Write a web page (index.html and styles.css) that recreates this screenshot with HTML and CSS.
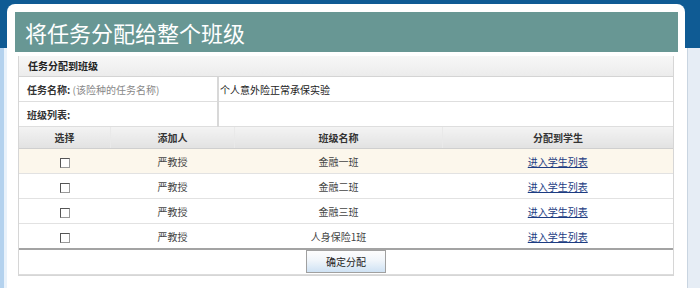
FILE: index.html
```html
<!DOCTYPE html>
<html>
	<head>
		<meta charset="UTF-8">
		<title>将任务分配给整个班级</title>
		<link rel="stylesheet" href="styles.css">
	</head>
	<body>
		<div class="panel">
			<h1 class="title">将任务分配给整个班级</h1>
			<div class="box">
				<div class="box-head">任务分配到班级</div>
				<table class="form">
					<tr>
						<th>任务名称: <span class="hint">(该险种的任务名称)</span></th>
						<td>个人意外险正常承保实验</td>
					</tr>
					<tr>
						<th>班级列表:</th>
						<td></td>
					</tr>
				</table>
				<table class="list">
					<thead>
						<tr>
							<th class="c1">选择</th>
							<th class="c2">添加人</th>
							<th class="c3">班级名称</th>
							<th class="c4">分配到学生</th>
						</tr>
					</thead>
					<tbody>
						<tr class="on">
							<td><input type="checkbox" class="chk"></td>
							<td>严教授</td>
							<td>金融一班</td>
							<td><a href="#">进入学生列表</a></td>
						</tr>
						<tr>
							<td><input type="checkbox" class="chk"></td>
							<td>严教授</td>
							<td>金融二班</td>
							<td><a href="#">进入学生列表</a></td>
						</tr>
						<tr>
							<td><input type="checkbox" class="chk"></td>
							<td>严教授</td>
							<td>金融三班</td>
							<td><a href="#">进入学生列表</a></td>
						</tr>
						<tr>
							<td><input type="checkbox" class="chk"></td>
							<td>严教授</td>
							<td>人身保险1班</td>
							<td><a href="#">进入学生列表</a></td>
						</tr>
					</tbody>
				</table>
				<div class="actions">
					<button class="btn">确定分配</button>
				</div>
			</div>
		</div>
	</body>
</html>
```

FILE: styles.css
```css
html,body{
	margin: 0;
	padding: 0;
	height: 100%;
	overflow: hidden;
}
body{
	font-family: "Noto Sans CJK SC", "Liberation Sans", sans-serif;
	font-size: 10px;
	color: #333;
	background:
		linear-gradient(#0f5b94, #0f5b94) top left / 100% 48px no-repeat,
		linear-gradient(to right, #b4d2ee 0, #b4d2ee 4px, #e9f2fb 4px, #e9f2fb 7px, transparent 7px),
		linear-gradient(to right, transparent 687px, #c9d5e1 687px, #c9d5e1 688px, #e6edf5 688px);
	padding-top: 4px;
	box-sizing: border-box;
}
.panel{
	width: 663px;
	height: 276px;
	margin-left: 7px;
	padding: 8px 7px 0 8px;
	background: #fff;
	border-radius: 8px 8px 0 0;
}
.title{
	margin: 0;
	height: 40px;
	line-height: 40px;
	padding-left: 10px;
	background: #689794;
	color: #fff;
	font-size: 22px;
	font-weight: normal;
}
.box{
	margin: 4px 4px 0 3px;
	border: 1px solid #d6d6d6;
	border-top: 0;
}
.box-head{
	height: 20px;
	line-height: 20px;
	padding-left: 9px;
	font-weight: bold;
	color: #222;
	background: linear-gradient(#f7f7f7, #ececec);
	border-bottom: 1px solid #d4d4d4;
}
table{
	width: 100%;
	border-collapse: collapse;
}
.form th,.form td{
	height: 24px;
	border-bottom: 1px solid #dedede;
	padding: 0;
	vertical-align: middle;
}
.form th{
	width: 190px;
	padding-left: 8px;
	text-align: left;
	font-weight: bold;
	color: #333;
	border-right: 2px solid #d8d8d8;
}
.form td{
	padding-left: 1px;
	color: #222;
}
.hint{
	font-weight: normal;
	color: #888;
}
.list th{
	height: 21px;
	padding: 0;
	font-weight: bold;
	color: #333;
	background: linear-gradient(#f3f3f3, #e2e2e2);
	border-bottom: 1px solid #cfcfcf;
	border-right: 1px solid #e9e9e9;
}
.list th.c4{
	border-right: 0;
}
.c1{ width: 91px; }
.c2{ width: 123px; }
.c3{ width: 207px; }
.list td{
	height: 24px;
	padding: 0;
	text-align: center;
	color: #444;
	border-bottom: 1px solid #e2e2e2;
}
.list tbody tr:last-child td{
	border-bottom: 2px solid #a3a3a3;
}
.list tr.on td{
	background: #fcf7ec;
}
.list a{
	color: #1c3c82;
	text-decoration: underline;
}
.chk{
	-webkit-appearance: none;
	appearance: none;
	width: 10px;
	height: 10px;
	margin: 0;
	vertical-align: middle;
	border: 1px solid #9a9a9a;
	border-top-color: #555;
	border-left-color: #555;
	background: #fff;
}
.actions{
	height: 24px;
	text-align: center;
	border-bottom: 1px solid #dcdcdc;
}
.btn{
	width: 80px;
	height: 23px;
	margin: 0;
	padding: 0;
	font-family: "Noto Sans CJK SC", "Liberation Sans", sans-serif;
	font-size: 10px;
	color: #222;
	border: 1px solid #a0a0a0;
	background: linear-gradient(#fdfdfd, #f0f5fa 45%, #cfe2f4);
	vertical-align: top;
}
```
